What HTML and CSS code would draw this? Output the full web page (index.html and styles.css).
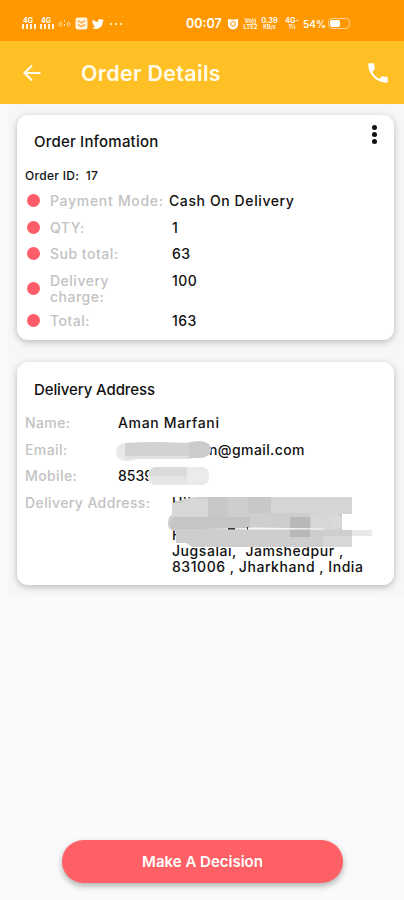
FILE: index.html
```html
<!DOCTYPE html>
<html lang="en">
<head>
  <meta charset="UTF-8" />
  <meta name="viewport" content="width=device-width, initial-scale=1.0"/>
  <title>Order Details</title>
  <link rel="stylesheet" href="styles.css">
</head>
<body>
  <div class="status-bar">
    <div class="status-left">
      <div class="signal"><span>4G</span><i></i></div>
      <div class="signal"><span>4G</span><i></i></div>
      <svg class="vibrate" width="13" height="10" viewBox="0 0 13 10"><path d="M2.500 3C.6 3 .6 7.500 2.500 7.500S4.300 3 2.500 3M10.500 3C8.700 3 8.700 7.500 10.500 7.500S12.300 3 10.500 3M6.500 1v2M6.500 5v2" /></svg>
      <svg class="mail" width="13" height="13" viewBox="0 0 13 13"><rect x=".5" y=".5" width="12" height="12" rx="2.500" fill="#fff3df"/><path d="M3 3.500l3.500 2.500L10 3.500M3 7.500l3.500 2L10 7.500" fill="none" stroke="#ffa126" stroke-width="1.300"/></svg>
      <svg class="bird" width="12" height="12" viewBox="0 0 24 24"><path fill="#fff" d="M23.900 4.600a10 10 0 0 1-2.800.8 5 5 0 0 0 2.100-2.700 10 10 0 0 1-3.100 1.200A4.900 4.900 0 0 0 11.700 8.400 14 14 0 0 1 1.600 3.200a4.900 4.900 0 0 0 1.500 6.600A5 5 0 0 1 .9 9.200a4.900 4.900 0 0 0 3.900 4.900 5 5 0 0 1-2.200.1 4.900 4.900 0 0 0 4.600 3.400A9.900 9.900 0 0 1 0 19.600 14 14 0 0 0 21.500 7.100a10 10 0 0 0 2.400-2.500z"/></svg>
      <span class="more"><b></b><b></b><b></b></span>
    </div>
    <div class="status-right">
      <span class="clock">00:07</span>
      <svg class="alarm" width="12" height="12" viewBox="0 0 12 12"><path d="M1 1l3 .5h4l3-.5v5.500a5 5 0 0 1-10 0z" fill="#fff"/><circle cx="6" cy="6" r="2.400" fill="none" stroke="#ff9800"/></svg>
      <div class="tiny volte"><span>Vo))</span><span>LTE2</span></div>
      <div class="tiny speed"><em>0.39</em><span>KB/s</span></div>
      <div class="tiny net"><em>4G-</em><span>1½</span></div>
      <span class="percent">54%</span>
      <span class="battery"><i></i></span>
    </div>
  </div>

  <header>
    <svg class="back" width="18" height="18" viewBox="0 0 18 18"><path d="M9 1.500L1.500 9 9 16.500M1.500 9H17.500" /></svg>
    <h1>Order Details</h1>
    <svg class="call" width="26" height="26" viewBox="0 0 24 24"><path fill="#fff" d="M6.620 10.790c1.440 2.830 3.760 5.140 6.590 6.590l2.200-2.200c.27-.27.67-.36 1.020-.24 1.120.37 2.330.57 3.570.57.55 0 1 .45 1 1V20c0 .55-.45 1-1 1-9.390 0-17-7.610-17-17 0-.55.45-1 1-1h3.500c.55 0 1 .45 1 1 0 1.250.2 2.450.57 3.570.11.35.03.74-.25 1.020l-2.200 2.200z"/></svg>
  </header>

  <main>
    <section class="card order">
      <div class="card-head">
        <h2>Order Infomation</h2>
        <div class="menu"><i></i><i></i><i></i></div>
      </div>
      <p class="order-id">Order ID: <span>17</span></p>
      <div class="row"><i class="dot"></i><span class="label mode">Payment Mode:</span><span class="value cash">Cash On Delivery</span></div>
      <div class="row"><i class="dot"></i><span class="label">QTY:</span><span class="value">1</span></div>
      <div class="row"><i class="dot"></i><span class="label">Sub total:</span><span class="value">63</span></div>
      <div class="row tall"><i class="dot"></i><span class="label">Delivery<br>charge:</span><span class="value">100</span></div>
      <div class="row"><i class="dot"></i><span class="label">Total:</span><span class="value">163</span></div>
    </section>

    <section class="card address">
      <h2>Delivery Address</h2>
      <div class="info"><span class="label">Name:</span><span class="value name">Aman Marfani</span></div>
      <div class="info"><span class="label">Email:</span><span class="value email">n@gmail.com
        <svg class="mask" width="98" height="20" viewBox="0 0 98 20"><rect y="2" width="24" height="18" rx="9" fill="#e9e9e9"/><path d="M9 2Q40 0 69 2Q92-3 95 7Q96 16 84 17L42 18L9 15Z" fill="#d2d2d2"/><path d="M9 15L75 15V18H9Z" fill="#e1e1e1"/><path d="M73 2Q92-3 95 7Q96 16 84 17H73Z" fill="#cbcbcb"/></svg>
      </span></div>
      <div class="info"><span class="label">Mobile:</span><span class="value mobile">8539
        <svg class="mask" width="61" height="18" viewBox="0 0 61 18"><rect width="61" height="18" rx="7" fill="#ebebeb"/><path d="M7 0H39V9H1Q0 2 7 0Z" fill="#dadada"/><path d="M2 9H39V17H8Q2 16 2 9Z" fill="#e5e5e5"/></svg>
      </span></div>
      <div class="info"><span class="label">Delivery Address:</span><span class="value lines">Hi'<br><br>F<br>Jugsalai,&nbsp; Jamshedpur ,<br>831006 , Jharkhand , India
        <svg class="mask" width="206" height="51" viewBox="0 0 206 51">
          <path d="M17 2Q22 0 32 0H184V17H174V33H204V39H184V50H24L18 46H8V34Q0 34 0 27Q0 19 4 18V6Z" fill="#cecece"/>
          <path d="M18 2H40V20H4V6H14Z" fill="#d7d7d7"/>
          <path d="M40 0H60V20H40ZM80 0H103V16H80Z" fill="#c8c8c8"/>
          <path d="M103 0H145V16H103ZM145 0H184V17H145Z" fill="#d5d5d5"/>
          <path d="M8 20H82V32H4Q-2 25 8 20Z" fill="#c5c5c5"/>
          <path d="M122 20H142V40H122Z" fill="#b8b8b8"/>
          <path d="M143 17H163V33H143ZM155 39H184V50H155Z" fill="#d7d7d7"/>
          <path d="M163 17H168Q174 18 174 26Q174 33 166 33H163Z" fill="#d9d9d9"/>
          <path d="M184 33H204V39H184Z" fill="#e9e9e9"/>
          <path d="M38 32L82 31V30.500L120 31L156 31.500V32.500L82 32.500Z" fill="#f7f7f7"/>
          <path d="M60 31H67V32.500H60ZM79 30H80V32.500H79Z" fill="#333"/>
        </svg>
      </span></div>
    </section>
  </main>

  <footer>
    <button id="decisionBtn">Make A Decision</button>
  </footer>
</body>
</html>
```
FILE: styles.css
```css
* {
  box-sizing: border-box;
}

body {
  height: 100vh;
  margin: 0;
  font-family: Inter, 'Open Sans', sans-serif;
  background: #fafafa;
  color: #111;
  display: flex;
  flex-direction: column;
  overflow: hidden;
}

svg {
  display: block;
  flex: none;
}

h1, h2, p {
  margin: 0;
}

/* status bar */
.status-bar {
  height: 41px;
  flex: none;
  background: #ff9800;
  color: #fff;
  display: flex;
  justify-content: space-between;
  padding: 6px 54px 0 22px;
}

.status-left, .status-right {
  display: flex;
  align-items: center;
}

.signal {
  width: 14px;
  margin-right: 4px;
  font-size: 7px;
  line-height: 6px;
  font-weight: 700;
}

.signal span {
  display: block;
  padding-left: 1px;
}

.signal i {
  display: block;
  height: 5px;
  background: repeating-linear-gradient(90deg, #fff3df 0 2px, transparent 2px 4px);
}

.vibrate {
  fill: none;
  stroke: #ffe1b3;
}

.mail, .bird {
  margin-left: 4px;
}

.more {
  display: flex;
  gap: 3px;
  margin-left: 6px;
}

.more b {
  width: 2px;
  height: 2px;
  border-radius: 50%;
  background: #fff;
}

.clock {
  font-size: 12.5px;
  font-weight: 600;
  width: 41px;
}

.tiny {
  display: flex;
  flex-direction: column;
  align-items: center;
  font-size: 5.5px;
  line-height: 6px;
  font-weight: 600;
}

.tiny em {
  font-size: 7.5px;
  line-height: 7px;
  font-style: normal;
}

.volte {
  width: 15px;
  margin-left: 4px;
  font-size: 6px;
}

.speed {
  width: 19px;
  margin-left: 2px;
}

.net {
  width: 14px;
  margin-left: 6px;
}

.percent {
  font-size: 10px;
  font-weight: 600;
  width: 21px;
  margin-left: 4px;
}

.battery {
  width: 22px;
  height: 11px;
  margin-left: 4px;
  padding: 1px;
  border: 1px solid #ffd18a;
  border-radius: 4px;
}

.battery i {
  display: block;
  width: 10px;
  height: 7px;
  border-radius: 2px;
  background: #fff;
}

/* app bar */
header {
  height: 63px;
  flex: none;
  background: #ffc026;
  display: flex;
  align-items: center;
  padding: 0 13px 0 23px;
}

.back {
  fill: none;
  stroke: #fffbe8;
  stroke-width: 2.2;
}

h1 {
  flex: 1;
  margin-left: 40px;
  font-size: 21.5px;
  font-weight: 600;
  letter-spacing: 0.3px;
  color: #fffbe8;
}

/* cards */
main {
  height: 493px;
  flex: none;
  margin-left: 8px;
  padding: 11px 10px 12px 9px;
  background: #f7f7f7;
  display: flex;
  flex-direction: column;
  gap: 22px;
}

.card {
  background: #fff;
  border-radius: 11px;
  box-shadow: 0 2px 7px rgba(0, 0, 0, 0.25);
  font-size: 14px;
  line-height: 16px;
}

.order {
  height: 225px;
  padding: 10px 17px 0 8px;
}

.address {
  height: 223px;
  padding: 18px 9px 0 8px;
}

.card-head {
  display: flex;
  justify-content: space-between;
  height: 42px;
}

h2 {
  font-size: 15px;
  line-height: 18px;
  font-weight: 500;
  letter-spacing: 0.2px;
  padding-left: 9px;
}

.address h2 {
  letter-spacing: -0.1px;
  padding-top: 1px;
  margin-bottom: 16px;
}

.card-head h2 {
  padding-top: 8px;
}

.menu {
  display: flex;
  flex-direction: column;
  gap: 2px;
}

.menu i {
  width: 5px;
  height: 5px;
  border-radius: 50%;
  background: #111;
}

.order-id {
  font-size: 12px;
  font-weight: 500;
  letter-spacing: 0.3px;
  height: 26px;
  padding-top: 1px;
}

.order-id span {
  margin-left: 3px;
}

.row {
  display: grid;
  grid-template-columns: 25px 122px 1fr;
  align-items: start;
  height: 26.6px;
}

.tall {
  height: 40px;
}

.dot {
  width: 13px;
  height: 13px;
  margin: 1px 0 0 1.5px;
  border-radius: 50%;
  background: #fd5d68;
}

.tall .dot {
  margin-top: 9px;
}

.label {
  color: #c2c2c2;
  font-weight: 500;
  letter-spacing: 0.5px;
  white-space: nowrap;
}

.mode {
  letter-spacing: 0.7px;
}

.value {
  font-weight: 500;
  letter-spacing: 0.4px;
  white-space: nowrap;
}

.cash {
  margin-left: -3px;
  letter-spacing: 0.6px;
}

.name {
  letter-spacing: 0.65px;
}

.info {
  display: grid;
  grid-template-columns: 93px 1fr;
  height: 26.6px;
}

.address .label {
  letter-spacing: 0.4px;
}

.email, .mobile, .lines {
  position: relative;
}

.email {
  padding-left: 91px;
}

.mobile {
  letter-spacing: 0;
}

.lines {
  margin-left: 54px;
  letter-spacing: 0.55px;
}

.mask {
  position: absolute;
}

.email .mask {
  top: -1px;
  left: -2px;
}

.mobile .mask {
  top: -1px;
  left: 30px;
}

.lines .mask {
  top: 2px;
  left: -4px;
}

/* bottom button */
footer {
  margin-top: auto;
  padding: 0 61px 17px 62px;
}

button {
  display: block;
  width: 100%;
  height: 43px;
  border: none;
  border-radius: 22px;
  background: #ff6066;
  color: #fff;
  font-family: inherit;
  font-size: 15px;
  font-weight: 600;
  box-shadow: 0 3px 6px rgba(0, 0, 0, 0.3);
  cursor: pointer;
}
```
